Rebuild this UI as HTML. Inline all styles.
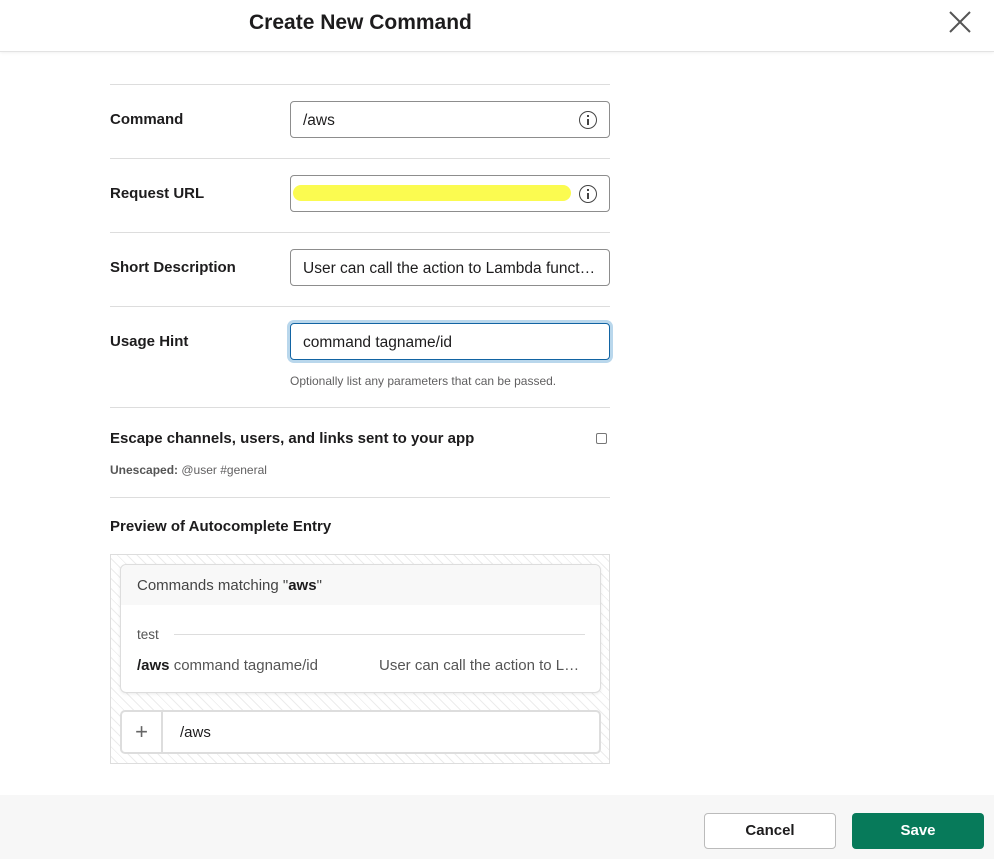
<!DOCTYPE html>
<html><head><style>
*{box-sizing:border-box;margin:0;padding:0}
body{width:994px;height:859px;background:#fff;font-family:"Liberation Sans",sans-serif;color:#1d1c1d;position:relative;overflow:hidden}
.hdr{position:absolute;left:0;top:0;width:994px;height:52px;border-bottom:1px solid #e3e3e3;box-shadow:0 1px 3px rgba(0,0,0,.06)}
.hdr h1{position:absolute;left:249px;top:11px;font-size:21px;font-weight:bold}
.x{position:absolute;left:948px;top:10px}
.hr{position:absolute;left:110px;width:500px;height:1px;background:#ddd}
.lbl{position:absolute;left:110px;font-size:15px;font-weight:bold}
.inp{position:absolute;left:290px;width:320px;height:37px;border:1px solid #8d8d8d;border-radius:4px;font-size:15.5px;padding:10px 12px 8px;white-space:nowrap;overflow:hidden}
.info{position:absolute;right:12px;top:9px;width:18px;height:18px;border:1.5px solid #444;border-radius:50%}
.info:before{content:"";position:absolute;left:6.5px;top:3px;width:2px;height:2px;background:#444}
.info:after{content:"";position:absolute;left:6.5px;top:6.5px;width:2px;height:6px;background:#444}
.small{position:absolute;font-size:12px;color:#616061}
.prev{position:absolute;left:110px;top:554px;width:500px;height:210px;border:1px solid #ddd;background:repeating-linear-gradient(45deg,#fff 0 4px,#ececec 4px 5px,#fff 5px 7px)}
.pop{position:absolute;left:9px;top:9px;width:481px;height:129px;background:#fff;border:1px solid #ddd;border-radius:6px;box-shadow:0 1px 3px rgba(0,0,0,.08)}
.pophd{height:40px;background:#f8f8f8;border-radius:6px 6px 0 0;font-size:15px;color:#444;padding:12px 16px}
.msg{position:absolute;left:9px;top:155px;width:481px;height:44px;border:2px solid #ddd;border-radius:5px;background:#fff}
.ftr{position:absolute;left:0;top:795px;width:994px;height:64px;background:#f7f7f7}
.btn{position:absolute;top:18px;width:132px;height:36px;border-radius:4px;font-size:15px;font-weight:bold;text-align:center;line-height:36px}
</style></head><body>
<div class="hdr"><h1>Create New Command</h1>
<svg class="x" width="24" height="24" viewBox="0 0 24 24"><path d="M2 2L22 22M22 2L2 22" stroke="#555" stroke-width="2"/></svg></div>

<div class="hr" style="top:84px"></div>
<div class="lbl" style="top:111px">Command</div>
<div class="inp" style="top:101px">/aws<span class="info"></span></div>
<div class="hr" style="top:158px"></div>
<div class="lbl" style="top:185px">Request URL</div>
<div class="inp" style="top:175px"><div style="position:absolute;left:2px;top:9px;width:278px;height:16px;background:#fbfb50;border-radius:8px"></div><span class="info"></span></div>
<div class="hr" style="top:232px"></div>
<div class="lbl" style="top:259px">Short Description</div>
<div class="inp" style="top:249px">User can call the action to Lambda funct…</div>
<div class="hr" style="top:306px"></div>
<div class="lbl" style="top:333px">Usage Hint</div>
<div class="inp" style="top:323px;border:1px solid #1264a3;box-shadow:0 0 0 3px #b9d7ec;padding-left:12px">command tagname/id</div>
<div class="small" style="left:290px;top:374px">Optionally list any parameters that can be passed.</div>
<div class="hr" style="top:407px"></div>
<div class="lbl" style="top:430px">Escape channels, users, and links sent to your app</div>
<div style="position:absolute;left:596px;top:433px;width:11px;height:11px;border:1px solid #777;border-radius:2px"></div>
<div class="small" style="left:110px;top:463px"><b style="color:#555">Unescaped:</b> @user #general</div>
<div class="hr" style="top:497px"></div>
<div class="lbl" style="top:518px">Preview of Autocomplete Entry</div>
<div class="prev">
 <div class="pop"><div class="pophd">Commands matching "<b style="color:#1d1c1d">aws</b>"</div>
  <div style="position:absolute;left:16px;top:62px;font-size:13.5px;color:#555">test</div>
  <div style="position:absolute;left:53px;top:69px;width:411px;height:1px;background:#ddd"></div>
  <div style="position:absolute;left:16px;top:92px;font-size:15px;color:#555"><b style="color:#1d1c1d">/aws</b> command tagname/id</div>
  <div style="position:absolute;left:258px;top:92px;font-size:15px;color:#555">User can call the action to L…</div>
 </div>
 <div class="msg"><div style="position:absolute;left:0;top:0;width:41px;height:40px;border-right:2px solid #ddd;font-size:22px;color:#666;text-align:center;line-height:40px">+</div>
 <div style="position:absolute;left:58px;top:12px;font-size:15px">/aws</div></div>
</div>
<div class="ftr">
 <div class="btn" style="left:704px;border:1px solid #bbb;background:#fff;color:#1d1c1d;line-height:34px">Cancel</div>
 <div class="btn" style="left:852px;background:#077a5a;color:#fff">Save</div>
</div>
</body></html>
